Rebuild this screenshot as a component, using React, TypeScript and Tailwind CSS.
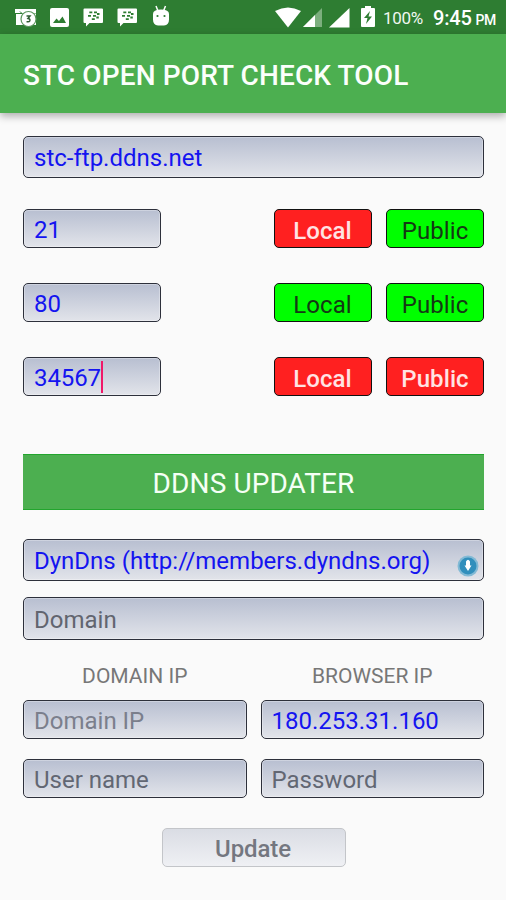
import type { ReactNode } from 'react';

const fieldBase =
  'flex items-center rounded-[5px] border border-[#2d303b] bg-linear-to-b from-[#b8bfd1] to-[#e2e4ea] pl-[10px] text-[24px] leading-none whitespace-nowrap shadow-[inset_0_0_0_1px_rgba(255,255,255,0.3)]';

function Field({ className, children }: { className: string; children: ReactNode }) {
  return (
    <div className={`${fieldBase} ${className}`}>
      <span className="block">{children}</span>
    </div>
  );
}

function Status({ label, open }: { label: string; open: boolean }) {
  return (
    <button
      className={`flex h-[39px] w-[98px] items-center justify-center rounded-[5px] border border-[#111] pt-[4px] text-[24px] leading-none tracking-[0.1px] ${
        open ? 'bg-[#00ff00] font-normal text-[#153915]' : 'bg-[#ff2020] font-medium text-[#ffe3e3]'
      }`}
    >
      {label}
    </button>
  );
}

function PortRow({ port, local, pub, active }: { port: string; local: boolean; pub: boolean; active?: boolean }) {
  return (
    <div className="flex h-[39px] items-center">
      <div className={`${fieldBase} h-[39px] w-[138px] text-[#1414f0]`}>
        <span className="block pt-[2px] tracking-[-0.1px]">{port}</span>
        {active && <i className="h-[32px] w-[2px] bg-[#f01868]" />}
      </div>
      <div className="ml-auto flex gap-[14.5px]">
        <Status label="Local" open={local} />
        <Status label="Public" open={pub} />
      </div>
    </div>
  );
}

function Messenger() {
  return (
    <svg width="21" height="19" viewBox="0 0 21 19">
      <path fill="#fff" d="M1.500 0.500h17.500q1 0 1 1v12.500q0 1-1 1H6.500L3 18.500V15H1.500q-1 0-1-1V1.500q0-1 1-1z" />
      <path
        stroke="#2e7d32"
        strokeWidth="1.800"
        d="M6.300 4.300h3M11 4.300h3M5 7.800h3M10 7.800h3M14 6h2.500M13.300 9.500h2.500M8.800 11.200h3"
      />
    </svg>
  );
}

function StatusBar() {
  return (
    <div className="flex h-[34px] items-start bg-[#2e7d32] text-white">
      <svg className="mt-[8px] ml-[15px] shrink-0" width="23" height="20" viewBox="0 0 23 20">
        <path fill="#fff" d="M0 1h21v4H0zM1 5.500h20V17H1z" />
        <path stroke="#2e7d32" fill="none" d="M1 5.500h6l-2-2" />
        <circle cx="13.500" cy="11" r="7.500" fill="#fff" stroke="#5c965e" strokeWidth="1.200" />
        <path d="M11.500 8h3.500l-2 2.500q2.500.3 1.800 2.300-.8 1.500-3.300.8" fill="none" stroke="#315c33" strokeWidth="1.500" />
      </svg>
      <svg className="mt-[8px] ml-[12px] shrink-0" width="19" height="19" viewBox="0 0 19 19">
        <rect width="19" height="19" rx="2" fill="#fff" />
        <path fill="#2e7d32" d="M3 15l3.500-4.500L9 13l3.500-4.500L16 15z" />
      </svg>
      <div className="mt-[8px] ml-[14px] shrink-0"><Messenger /></div>
      <div className="mt-[8px] ml-[13px] shrink-0"><Messenger /></div>
      <svg className="mt-[5px] ml-[14px] shrink-0" width="18" height="21" viewBox="0 0 18 21">
        <path d="M4 1l2 5M13.500 1l-2 5" stroke="#fff" strokeWidth="1.500" />
        <path fill="#fff" d="M1 9q0-4.500 8-4.500t8 4.500v5.500q0 5.500-5 6H6q-5-.5-5-6z" />
        <circle cx="5.500" cy="11" r="1.100" fill="#2e7d32" />
        <circle cx="12.500" cy="11" r="1.100" fill="#2e7d32" />
      </svg>
      <svg className="mt-[7px] ml-[105px] shrink-0" width="26" height="21" viewBox="0 0 26 21">
        <path fill="#fff" d="M0 4Q13-3 26 4L13 20.500z" />
      </svg>
      <svg className="mt-[8px] ml-[1px] shrink-0" width="21" height="20" viewBox="0 0 21 20">
        <path fill="#7caf7e" d="M20 0v19H1z" />
        <path fill="#fff" d="M13 7v12H1z" />
      </svg>
      <svg className="mt-[8px] ml-[6px] shrink-0" width="21" height="20" viewBox="0 0 21 20">
        <path fill="#fff" d="M20.500 0v19.500H0z" />
      </svg>
      <svg className="mt-[6px] ml-[11px] shrink-0" width="14" height="22" viewBox="0 0 14 22">
        <path fill="#fff" d="M4 0h6v2h3q1 0 1 1v17q0 1-1 1H1q-1 0-1-1V3q0-1 1-1h3z" />
        <path fill="#2e7d32" d="M9 5l-6 7h3.500L5 18l6-7.500H7.500z" />
      </svg>
      <span className="mt-[9px] ml-[8px] w-[42px] text-[17px] leading-[19px] tracking-[-0.3px] text-[#f0f7f0]">100%</span>
      <span className="mt-[8px] ml-[8px] text-[20px] leading-[21px] font-medium tracking-[-0.2px]">9:45</span>
      <span className="mt-[11px] ml-[4px] text-[14px] leading-[18px] font-medium tracking-[-0.4px]">PM</span>
    </div>
  );
}

export default function App() {
  return (
    <div className="flex h-[900px] w-[506px] flex-col overflow-hidden bg-[#fafafa] font-[Roboto,sans-serif]">
      <StatusBar />
      <header className="flex h-[79px] shrink-0 items-center bg-[#4caf50] pt-[5px] pl-[23px] text-[28px] leading-none font-medium tracking-[0.12px] whitespace-nowrap text-[#fbfffb] shadow-[0_3px_8px_rgba(0,0,0,0.32)]">
        STC OPEN PORT CHECK TOOL
      </header>
      <main className="flex flex-col pt-[23px] pr-[22px] pl-[23px]">
        <Field className="h-[42px] pt-[2px] text-[#1414f0]">stc-ftp.ddns.net</Field>
        <div className="mt-[31px] flex flex-col gap-[35px]">
          <PortRow port="21" local={false} pub />
          <PortRow port="80" local pub />
          <PortRow port="34567" local={false} pub={false} active />
        </div>
        <h2 className="mt-[58px] flex h-[56px] items-center justify-center border-y border-[#22a52d] bg-[#4caf50] pt-[3px] text-[28px] leading-none tracking-[0.1px] text-[#f5fff5]">
          DDNS UPDATER
        </h2>
        <div className={`${fieldBase} mt-[29px] h-[42px] pt-[2px] text-[#1414f0]`}>
          <span>DynDns (http://members.dyndns.org)</span>
          <svg className="mt-[9px] mr-[4px] ml-auto shrink-0" width="22" height="22" viewBox="0 0 22 22">
            <circle cx="11" cy="11" r="10.500" fill="#83bad5" />
            <circle cx="11" cy="11" r="8.500" fill="#318fbc" />
            <path fill="#fff" d="M9 6.500Q11 3 13 6.500v4h1.500L11 16l-3.500-5.500H9z" />
          </svg>
        </div>
        <Field className="mt-[16px] h-[43px] pt-[2px] text-[#62656f]">Domain</Field>
        <div className="mt-[24px] grid h-[24px] grid-cols-2 gap-[14px] text-center text-[21px] leading-[24px] text-[#777]">
          <span>DOMAIN IP</span>
          <span>BROWSER IP</span>
        </div>
        <div className="mt-[12px] grid grid-cols-2 gap-x-[14px] gap-y-[20px]">
          <Field className="h-[39px] pt-[2px] text-[#7b7f8c]">Domain IP</Field>
          <Field className="h-[39px] pt-[2px] text-[#1414f0]">180.253.31.160</Field>
          <Field className="h-[39px] pt-[2px] text-[#626773]">User name</Field>
          <Field className="h-[39px] pt-[2px] text-[#626773]">Password</Field>
        </div>
        <button className="mt-[30px] ml-[139px] flex h-[39px] w-[184px] items-center justify-center rounded-[5px] border border-[#c3c5c9] bg-linear-to-b from-[#dadde4] to-[#eff0f4] pt-[3px] pr-[2px] text-[24px] leading-none font-medium tracking-[-0.1px] text-[#747780]">
          Update
        </button>
      </main>
    </div>
  );
}
